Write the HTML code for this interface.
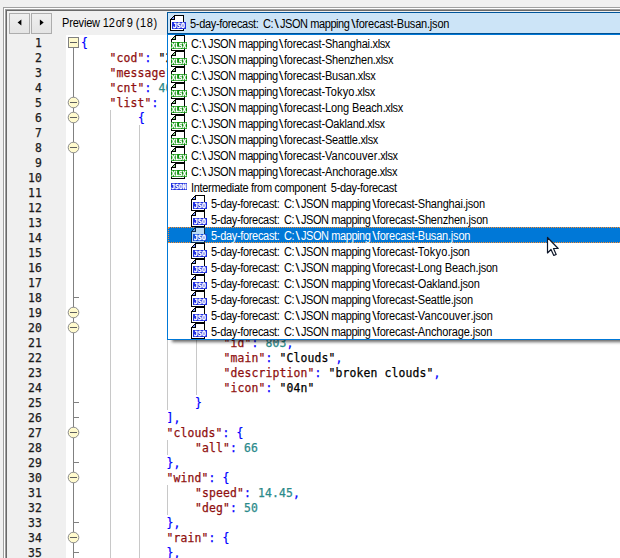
<!DOCTYPE html>
<html><head><meta charset="utf-8"><title>Preview</title>
<style>
html,body{margin:0;padding:0}
body{width:620px;height:558px;overflow:hidden;position:relative;background:#f0f0f0;font-family:"Liberation Sans",sans-serif;font-size:11px;color:#000}
.abs{position:absolute}
.ln{position:absolute;left:12px;width:30px;margin-top:1px;text-align:right;font:11.4px/15px "DejaVu Sans Mono","Liberation Mono",monospace;color:#1a1a1a;height:15px}
.cl{position:absolute;white-space:pre;margin-top:1px;font:11.4px/15px "DejaVu Sans Mono","Liberation Mono",monospace;height:15px}
.cl,.ln{letter-spacing:.137px}
.cl,.ln{-webkit-text-stroke:.25px}
.k{color:#8f1010}.p{color:#0000ff}.s{color:#000}.n{color:#2b8a8a}
.btn{position:absolute;top:13px;width:19px;height:19px;border:1px solid #adadad;background:linear-gradient(#efefef,#e4e4e4)}
.row{position:absolute;left:168px;right:0;height:16px;line-height:16px;white-space:pre}
.row svg{position:absolute;top:0;will-change:transform}
.row span,.lbl{position:absolute;top:1px;font-size:12.3px;letter-spacing:-.358px;transform:scaleX(.8943);transform-origin:0 50%}
.row i,.lbl i{font-style:normal}
.b1,.b2{display:inline-block;transform:scaleX(1.4)}
.c2{margin-right:1.79px}.b1{margin:0 2.91px 0 1.57px}.b2{margin:0 1.6px 0 2.42px}.sc{letter-spacing:-.47px}.sd{letter-spacing:-.224px}
.g{position:absolute;width:1px;background:#c8c8c8}
</style></head><body>

<div class="abs" style="left:3px;top:7px;right:0;height:1px;background:#a0a0a0"></div>
<div class="abs" style="left:3px;top:7px;bottom:0;width:1px;background:#a0a0a0"></div>
<div class="abs" style="left:4px;top:8px;right:0;height:1px;background:#fff"></div>
<div class="abs" style="left:4px;top:8px;bottom:0;width:1px;background:#fff"></div>
<div class="abs" style="left:5px;top:9px;right:0;height:1px;background:#a0a0a0"></div>
<div class="abs" style="left:5px;top:9px;bottom:0;width:1px;background:#a0a0a0"></div>
<div class="abs" style="left:6px;top:10px;right:0;height:1px;background:#696969"></div>
<div class="abs" style="left:6px;top:10px;bottom:0;width:1px;background:#696969"></div>
<div class="btn" style="left:9px"><svg width="19" height="19" style="position:absolute;left:0;top:0"><path d="M11.4 5.4 V11.6 L7.6 8.5 Z" fill="#000"/></svg></div>
<div class="btn" style="left:31px"><svg width="19" height="19" style="position:absolute;left:0;top:0"><path d="M7.9 5.4 V11.6 L11.7 8.5 Z" fill="#000"/></svg></div>
<div class="lbl" style="left:62px;top:12px;height:22px;line-height:22px;white-space:pre;letter-spacing:-.2px">Preview 12<i style="margin-left:-1.68px;letter-spacing:-.45px"> of 9</i><i style="margin-left:-.34px;letter-spacing:.615px"> (18)</i></div>
<div class="abs" style="left:66px;top:35px;right:0;bottom:0;background:#fff"></div>
<div class="ln" style="top:35px">1</div>
<div class="ln" style="top:50px">2</div>
<div class="ln" style="top:65px">3</div>
<div class="ln" style="top:80px">4</div>
<div class="ln" style="top:95px">5</div>
<div class="ln" style="top:110px">6</div>
<div class="ln" style="top:125px">7</div>
<div class="ln" style="top:140px">8</div>
<div class="ln" style="top:155px">9</div>
<div class="ln" style="top:170px">10</div>
<div class="ln" style="top:185px">11</div>
<div class="ln" style="top:200px">12</div>
<div class="ln" style="top:215px">13</div>
<div class="ln" style="top:230px">14</div>
<div class="ln" style="top:245px">15</div>
<div class="ln" style="top:260px">16</div>
<div class="ln" style="top:275px">17</div>
<div class="ln" style="top:290px">18</div>
<div class="ln" style="top:305px">19</div>
<div class="ln" style="top:320px">20</div>
<div class="ln" style="top:335px">21</div>
<div class="ln" style="top:350px">22</div>
<div class="ln" style="top:365px">23</div>
<div class="ln" style="top:380px">24</div>
<div class="ln" style="top:395px">25</div>
<div class="ln" style="top:410px">26</div>
<div class="ln" style="top:425px">27</div>
<div class="ln" style="top:440px">28</div>
<div class="ln" style="top:455px">29</div>
<div class="ln" style="top:470px">30</div>
<div class="ln" style="top:485px">31</div>
<div class="ln" style="top:500px">32</div>
<div class="ln" style="top:515px">33</div>
<div class="ln" style="top:530px">34</div>
<div class="ln" style="top:545px">35</div>
<div class="g" style="left:110px;top:110px;height:480px"></div>
<div class="g" style="left:139px;top:125px;height:465px"></div>
<div class="g" style="left:167px;top:125px;height:285px"></div>
<div class="g" style="left:196px;top:125px;height:270px"></div>
<div class="g" style="left:167px;top:440px;height:15px"></div>
<div class="g" style="left:167px;top:485px;height:30px"></div>
<div class="abs" style="left:73px;top:48px;bottom:0;width:1px;background:#808080"></div>
<div class="abs" style="left:73px;top:297px;width:6px;height:1px;background:#808080"></div>
<div class="abs" style="left:73px;top:402px;width:6px;height:1px;background:#808080"></div>
<div class="abs" style="left:73px;top:417px;width:6px;height:1px;background:#808080"></div>
<div class="abs" style="left:73px;top:462px;width:6px;height:1px;background:#808080"></div>
<div class="abs" style="left:73px;top:522px;width:6px;height:1px;background:#808080"></div>
<div class="abs" style="left:73px;top:552px;width:6px;height:1px;background:#808080"></div>
<div class="abs" style="left:68px;top:37px;width:9px;height:9px;border:1px solid #808080;background:#fffacd"><div class="abs" style="left:1px;top:4px;width:7px;height:1px;background:#606060"></div></div>
<svg class="abs" style="left:67px;top:96px" width="13" height="13"><circle cx="6.5" cy="6.5" r="5.3" fill="#fffacd" stroke="#8c8c8c" stroke-width="1"/><rect x="3" y="6" width="7" height="1" fill="#606060"/></svg>
<svg class="abs" style="left:67px;top:111px" width="13" height="13"><circle cx="6.5" cy="6.5" r="5.3" fill="#fffacd" stroke="#8c8c8c" stroke-width="1"/><rect x="3" y="6" width="7" height="1" fill="#606060"/></svg>
<svg class="abs" style="left:67px;top:141px" width="13" height="13"><circle cx="6.5" cy="6.5" r="5.3" fill="#fffacd" stroke="#8c8c8c" stroke-width="1"/><rect x="3" y="6" width="7" height="1" fill="#606060"/></svg>
<svg class="abs" style="left:67px;top:306px" width="13" height="13"><circle cx="6.5" cy="6.5" r="5.3" fill="#fffacd" stroke="#8c8c8c" stroke-width="1"/><rect x="3" y="6" width="7" height="1" fill="#606060"/></svg>
<svg class="abs" style="left:67px;top:321px" width="13" height="13"><circle cx="6.5" cy="6.5" r="5.3" fill="#fffacd" stroke="#8c8c8c" stroke-width="1"/><rect x="3" y="6" width="7" height="1" fill="#606060"/></svg>
<svg class="abs" style="left:67px;top:426px" width="13" height="13"><circle cx="6.5" cy="6.5" r="5.3" fill="#fffacd" stroke="#8c8c8c" stroke-width="1"/><rect x="3" y="6" width="7" height="1" fill="#606060"/></svg>
<svg class="abs" style="left:67px;top:471px" width="13" height="13"><circle cx="6.5" cy="6.5" r="5.3" fill="#fffacd" stroke="#8c8c8c" stroke-width="1"/><rect x="3" y="6" width="7" height="1" fill="#606060"/></svg>
<svg class="abs" style="left:67px;top:531px" width="13" height="13"><circle cx="6.5" cy="6.5" r="5.3" fill="#fffacd" stroke="#8c8c8c" stroke-width="1"/><rect x="3" y="6" width="7" height="1" fill="#606060"/></svg>
<div class="cl" style="left:81.1px;top:35px"><span class="p">{</span></div>
<div class="cl" style="left:109.6px;top:50px"><span class="k">"cod"</span><span class="p">: </span><span class="s">"200",</span></div>
<div class="cl" style="left:109.6px;top:65px"><span class="k">"message"</span><span class="p">: </span><span class="n">0</span><span class="p">,</span></div>
<div class="cl" style="left:109.6px;top:80px"><span class="k">"cnt"</span><span class="p">: </span><span class="n">40</span><span class="p">,</span></div>
<div class="cl" style="left:109.6px;top:95px"><span class="k">"list"</span><span class="p">: [</span></div>
<div class="cl" style="left:138.1px;top:110px"><span class="p">{</span></div>
<div class="cl" style="left:223.6px;top:335px"><span class="k">"id"</span><span class="p">: </span><span class="n">803</span><span class="p">,</span></div>
<div class="cl" style="left:223.6px;top:350px"><span class="k">"main"</span><span class="p">: </span><span class="s">"Clouds"</span><span class="p">,</span></div>
<div class="cl" style="left:223.6px;top:365px"><span class="k">"description"</span><span class="p">: </span><span class="s">"broken clouds"</span><span class="p">,</span></div>
<div class="cl" style="left:223.6px;top:380px"><span class="k">"icon"</span><span class="p">: </span><span class="s">"04n"</span></div>
<div class="cl" style="left:195.1px;top:395px"><span class="p">}</span></div>
<div class="cl" style="left:166.6px;top:410px"><span class="p">],</span></div>
<div class="cl" style="left:166.6px;top:425px"><span class="k">"clouds"</span><span class="p">: {</span></div>
<div class="cl" style="left:195.1px;top:440px"><span class="k">"all"</span><span class="p">: </span><span class="n">66</span></div>
<div class="cl" style="left:166.6px;top:455px"><span class="p">},</span></div>
<div class="cl" style="left:166.6px;top:470px"><span class="k">"wind"</span><span class="p">: {</span></div>
<div class="cl" style="left:195.1px;top:485px"><span class="k">"speed"</span><span class="p">: </span><span class="n">14.45</span><span class="p">,</span></div>
<div class="cl" style="left:195.1px;top:500px"><span class="k">"deg"</span><span class="p">: </span><span class="n">50</span></div>
<div class="cl" style="left:166.6px;top:515px"><span class="p">},</span></div>
<div class="cl" style="left:166.6px;top:530px"><span class="k">"rain"</span><span class="p">: {</span></div>
<div class="cl" style="left:166.6px;top:545px"><span class="p">},</span></div>
<div class="abs" style="left:167px;top:12px;right:0;height:20px;border:1px solid #005499;border-right:none;background:#cce4f7"></div>
<div class="row" style="top:15px"><svg width="16" height="16" style="left:2px" shape-rendering="crispEdges"><path d="M4.5 0.5 H13.5 V15.5 H0.5 V4.5 Z" fill="#fff" stroke="#000"/><path d="M0.5 4.5 H4.5 V0.5 Z" fill="#7f9cff" stroke="#000"/><rect x="2" y="7" width="14" height="7" fill="#1f2fe0"/><text x="3" y="13" font-family="DejaVu Sans Mono,monospace" font-size="7" font-weight="bold" fill="#fff" stroke="#fff" stroke-width=".35" textLength="12" lengthAdjust="spacingAndGlyphs">JSO</text></svg><span style="left:22px">5-day-forecast<i class="c2">:</i> C<i class="c">:</i><i class="b1">\</i><i class="sc">JSON mapping</i><i class="b2">\</i><i class="sd">forecast-Busan.json</i></span></div>
<div class="abs" style="left:167px;top:34px;right:0;height:304px;border:1px solid #0078d7;border-right:none;background:#fff;box-shadow:5px 2px 3px rgba(0,0,0,.6)"></div>
<div class="row" style="top:35px"><svg x="0" width="16" height="16" style="left:3px" shape-rendering="crispEdges"><path d="M4.5 0.5 H13.5 V15.5 H0.5 V4.5 Z" fill="#fff" stroke="#000"/><path d="M0.5 4.5 H4.5 V0.5 Z" fill="#8fce8f" stroke="#000"/><rect x="0" y="7" width="16" height="7" fill="#0c900c"/><text x="0.5" y="13" font-family="DejaVu Sans,sans-serif" font-size="6.8" font-weight="bold" fill="#fff" stroke="#fff" stroke-width=".35" textLength="15" lengthAdjust="spacingAndGlyphs">XLSX</text></svg><span style="left:23px">C<i class="c">:</i><i class="b1">\</i><i class="sc">JSON mapping</i><i class="b2">\</i><i class="sd">forecast-Shanghai<i style="letter-spacing:-.4px">.xlsx</i></i></span></div>
<div class="row" style="top:51px"><svg x="0" width="16" height="16" style="left:3px" shape-rendering="crispEdges"><path d="M4.5 0.5 H13.5 V15.5 H0.5 V4.5 Z" fill="#fff" stroke="#000"/><path d="M0.5 4.5 H4.5 V0.5 Z" fill="#8fce8f" stroke="#000"/><rect x="0" y="7" width="16" height="7" fill="#0c900c"/><text x="0.5" y="13" font-family="DejaVu Sans,sans-serif" font-size="6.8" font-weight="bold" fill="#fff" stroke="#fff" stroke-width=".35" textLength="15" lengthAdjust="spacingAndGlyphs">XLSX</text></svg><span style="left:23px">C<i class="c">:</i><i class="b1">\</i><i class="sc">JSON mapping</i><i class="b2">\</i><i class="sd">forecast-Shenzhen<i style="letter-spacing:-.4px">.xlsx</i></i></span></div>
<div class="row" style="top:67px"><svg x="0" width="16" height="16" style="left:3px" shape-rendering="crispEdges"><path d="M4.5 0.5 H13.5 V15.5 H0.5 V4.5 Z" fill="#fff" stroke="#000"/><path d="M0.5 4.5 H4.5 V0.5 Z" fill="#8fce8f" stroke="#000"/><rect x="0" y="7" width="16" height="7" fill="#0c900c"/><text x="0.5" y="13" font-family="DejaVu Sans,sans-serif" font-size="6.8" font-weight="bold" fill="#fff" stroke="#fff" stroke-width=".35" textLength="15" lengthAdjust="spacingAndGlyphs">XLSX</text></svg><span style="left:23px">C<i class="c">:</i><i class="b1">\</i><i class="sc">JSON mapping</i><i class="b2">\</i><i class="sd">forecast-Busan<i style="letter-spacing:-.4px">.xlsx</i></i></span></div>
<div class="row" style="top:83px"><svg x="0" width="16" height="16" style="left:3px" shape-rendering="crispEdges"><path d="M4.5 0.5 H13.5 V15.5 H0.5 V4.5 Z" fill="#fff" stroke="#000"/><path d="M0.5 4.5 H4.5 V0.5 Z" fill="#8fce8f" stroke="#000"/><rect x="0" y="7" width="16" height="7" fill="#0c900c"/><text x="0.5" y="13" font-family="DejaVu Sans,sans-serif" font-size="6.8" font-weight="bold" fill="#fff" stroke="#fff" stroke-width=".35" textLength="15" lengthAdjust="spacingAndGlyphs">XLSX</text></svg><span style="left:23px">C<i class="c">:</i><i class="b1">\</i><i class="sc">JSON mapping</i><i class="b2">\</i><i class="sd">forecast-<i style="letter-spacing:0.223px">Tokyo</i><i style="letter-spacing:-.4px">.xlsx</i></i></span></div>
<div class="row" style="top:99px"><svg x="0" width="16" height="16" style="left:3px" shape-rendering="crispEdges"><path d="M4.5 0.5 H13.5 V15.5 H0.5 V4.5 Z" fill="#fff" stroke="#000"/><path d="M0.5 4.5 H4.5 V0.5 Z" fill="#8fce8f" stroke="#000"/><rect x="0" y="7" width="16" height="7" fill="#0c900c"/><text x="0.5" y="13" font-family="DejaVu Sans,sans-serif" font-size="6.8" font-weight="bold" fill="#fff" stroke="#fff" stroke-width=".35" textLength="15" lengthAdjust="spacingAndGlyphs">XLSX</text></svg><span style="left:23px">C<i class="c">:</i><i class="b1">\</i><i class="sc">JSON mapping</i><i class="b2">\</i><i class="sd">forecast-<i style="letter-spacing:-0.112px">Long Beach</i><i style="letter-spacing:-.4px">.xlsx</i></i></span></div>
<div class="row" style="top:115px"><svg x="0" width="16" height="16" style="left:3px" shape-rendering="crispEdges"><path d="M4.5 0.5 H13.5 V15.5 H0.5 V4.5 Z" fill="#fff" stroke="#000"/><path d="M0.5 4.5 H4.5 V0.5 Z" fill="#8fce8f" stroke="#000"/><rect x="0" y="7" width="16" height="7" fill="#0c900c"/><text x="0.5" y="13" font-family="DejaVu Sans,sans-serif" font-size="6.8" font-weight="bold" fill="#fff" stroke="#fff" stroke-width=".35" textLength="15" lengthAdjust="spacingAndGlyphs">XLSX</text></svg><span style="left:23px">C<i class="c">:</i><i class="b1">\</i><i class="sc">JSON mapping</i><i class="b2">\</i><i class="sd">forecast-Oakland<i style="letter-spacing:-.4px">.xlsx</i></i></span></div>
<div class="row" style="top:131px"><svg x="0" width="16" height="16" style="left:3px" shape-rendering="crispEdges"><path d="M4.5 0.5 H13.5 V15.5 H0.5 V4.5 Z" fill="#fff" stroke="#000"/><path d="M0.5 4.5 H4.5 V0.5 Z" fill="#8fce8f" stroke="#000"/><rect x="0" y="7" width="16" height="7" fill="#0c900c"/><text x="0.5" y="13" font-family="DejaVu Sans,sans-serif" font-size="6.8" font-weight="bold" fill="#fff" stroke="#fff" stroke-width=".35" textLength="15" lengthAdjust="spacingAndGlyphs">XLSX</text></svg><span style="left:23px">C<i class="c">:</i><i class="b1">\</i><i class="sc">JSON mapping</i><i class="b2">\</i><i class="sd">forecast-Seattle<i style="letter-spacing:-.4px">.xlsx</i></i></span></div>
<div class="row" style="top:147px"><svg x="0" width="16" height="16" style="left:3px" shape-rendering="crispEdges"><path d="M4.5 0.5 H13.5 V15.5 H0.5 V4.5 Z" fill="#fff" stroke="#000"/><path d="M0.5 4.5 H4.5 V0.5 Z" fill="#8fce8f" stroke="#000"/><rect x="0" y="7" width="16" height="7" fill="#0c900c"/><text x="0.5" y="13" font-family="DejaVu Sans,sans-serif" font-size="6.8" font-weight="bold" fill="#fff" stroke="#fff" stroke-width=".35" textLength="15" lengthAdjust="spacingAndGlyphs">XLSX</text></svg><span style="left:23px">C<i class="c">:</i><i class="b1">\</i><i class="sc">JSON mapping</i><i class="b2">\</i><i class="sd">forecast-<i style="letter-spacing:0.099px">Vancouver</i><i style="letter-spacing:-.4px">.xlsx</i></i></span></div>
<div class="row" style="top:163px"><svg x="0" width="16" height="16" style="left:3px" shape-rendering="crispEdges"><path d="M4.5 0.5 H13.5 V15.5 H0.5 V4.5 Z" fill="#fff" stroke="#000"/><path d="M0.5 4.5 H4.5 V0.5 Z" fill="#8fce8f" stroke="#000"/><rect x="0" y="7" width="16" height="7" fill="#0c900c"/><text x="0.5" y="13" font-family="DejaVu Sans,sans-serif" font-size="6.8" font-weight="bold" fill="#fff" stroke="#fff" stroke-width=".35" textLength="15" lengthAdjust="spacingAndGlyphs">XLSX</text></svg><span style="left:23px">C<i class="c">:</i><i class="b1">\</i><i class="sc">JSON mapping</i><i class="b2">\</i><i class="sd">forecast-<i style="letter-spacing:-0.149px">Anchorage</i><i style="letter-spacing:-.4px">.xlsx</i></i></span></div>
<div class="row" style="top:179px"><svg width="16" height="16" style="left:3px" shape-rendering="crispEdges"><rect x="0" y="4" width="16" height="7" fill="#1f2fe0"/><text x="0.5" y="10" font-family="DejaVu Sans Mono,monospace" font-size="6.8" font-weight="bold" fill="#fff" stroke="#fff" stroke-width=".35" textLength="15" lengthAdjust="spacingAndGlyphs">JSON</text></svg><span style="left:23px">Intermediate from component <i style="margin-left:2.4px">5-day-forecast</i></span></div>
<div class="row" style="top:195px;"><svg width="16" height="16" style="left:23px" shape-rendering="crispEdges"><path d="M4.5 0.5 H13.5 V15.5 H0.5 V4.5 Z" fill="#fff" stroke="#000"/><path d="M0.5 4.5 H4.5 V0.5 Z" fill="#7f9cff" stroke="#000"/><rect x="2" y="7" width="14" height="7" fill="#1f2fe0"/><text x="3" y="13" font-family="DejaVu Sans Mono,monospace" font-size="7" font-weight="bold" fill="#fff" stroke="#fff" stroke-width=".35" textLength="12" lengthAdjust="spacingAndGlyphs">JSO</text></svg><span id="tSha" style="left:43px">5-day-forecast<i class="c2">:</i> C<i class="c">:</i><i class="b1">\</i><i class="sc">JSON mapping</i><i class="b2">\</i><i class="sd">forecast-Shanghai.json</i></span></div>
<div class="row" style="top:211px;"><svg width="16" height="16" style="left:23px" shape-rendering="crispEdges"><path d="M4.5 0.5 H13.5 V15.5 H0.5 V4.5 Z" fill="#fff" stroke="#000"/><path d="M0.5 4.5 H4.5 V0.5 Z" fill="#7f9cff" stroke="#000"/><rect x="2" y="7" width="14" height="7" fill="#1f2fe0"/><text x="3" y="13" font-family="DejaVu Sans Mono,monospace" font-size="7" font-weight="bold" fill="#fff" stroke="#fff" stroke-width=".35" textLength="12" lengthAdjust="spacingAndGlyphs">JSO</text></svg><span id="tShe" style="left:43px">5-day-forecast<i class="c2">:</i> C<i class="c">:</i><i class="b1">\</i><i class="sc">JSON mapping</i><i class="b2">\</i><i class="sd">forecast-Shenzhen.json</i></span></div>
<div class="row" style="top:227px;background:#0078d7;color:#fff;right:-4px;outline:1px dotted #ff8c2a;outline-offset:-1px;"><svg width="16" height="16" style="left:23px" shape-rendering="crispEdges"><path d="M4.5 0.5 H13.5 V15.5 H0.5 V4.5 Z" fill="#b5d9f4" stroke="#0b2d50"/><path d="M0.5 4.5 H4.5 V0.5 Z" fill="#5f9cf0" stroke="#0b2d50"/><rect x="2" y="7" width="14" height="7" fill="#1450dc"/><text x="3" y="13" font-family="DejaVu Sans Mono,monospace" font-size="7" font-weight="bold" fill="#fff" stroke="#fff" stroke-width=".35" textLength="12" lengthAdjust="spacingAndGlyphs">JSO</text></svg><span id="tBus" style="left:43px">5-day-forecast<i class="c2">:</i> C<i class="c">:</i><i class="b1">\</i><i class="sc">JSON mapping</i><i class="b2">\</i><i class="sd">forecast-Busan.json</i></span></div>
<div class="row" style="top:243px;"><svg width="16" height="16" style="left:23px" shape-rendering="crispEdges"><path d="M4.5 0.5 H13.5 V15.5 H0.5 V4.5 Z" fill="#fff" stroke="#000"/><path d="M0.5 4.5 H4.5 V0.5 Z" fill="#7f9cff" stroke="#000"/><rect x="2" y="7" width="14" height="7" fill="#1f2fe0"/><text x="3" y="13" font-family="DejaVu Sans Mono,monospace" font-size="7" font-weight="bold" fill="#fff" stroke="#fff" stroke-width=".35" textLength="12" lengthAdjust="spacingAndGlyphs">JSO</text></svg><span id="tTok" style="left:43px">5-day-forecast<i class="c2">:</i> C<i class="c">:</i><i class="b1">\</i><i class="sc">JSON mapping</i><i class="b2">\</i><i class="sd">forecast-<i style="letter-spacing:0.223px">Tokyo</i>.json</i></span></div>
<div class="row" style="top:259px;"><svg width="16" height="16" style="left:23px" shape-rendering="crispEdges"><path d="M4.5 0.5 H13.5 V15.5 H0.5 V4.5 Z" fill="#fff" stroke="#000"/><path d="M0.5 4.5 H4.5 V0.5 Z" fill="#7f9cff" stroke="#000"/><rect x="2" y="7" width="14" height="7" fill="#1f2fe0"/><text x="3" y="13" font-family="DejaVu Sans Mono,monospace" font-size="7" font-weight="bold" fill="#fff" stroke="#fff" stroke-width=".35" textLength="12" lengthAdjust="spacingAndGlyphs">JSO</text></svg><span id="tLon" style="left:43px">5-day-forecast<i class="c2">:</i> C<i class="c">:</i><i class="b1">\</i><i class="sc">JSON mapping</i><i class="b2">\</i><i class="sd">forecast-<i style="letter-spacing:-0.112px">Long Beach</i>.json</i></span></div>
<div class="row" style="top:275px;"><svg width="16" height="16" style="left:23px" shape-rendering="crispEdges"><path d="M4.5 0.5 H13.5 V15.5 H0.5 V4.5 Z" fill="#fff" stroke="#000"/><path d="M0.5 4.5 H4.5 V0.5 Z" fill="#7f9cff" stroke="#000"/><rect x="2" y="7" width="14" height="7" fill="#1f2fe0"/><text x="3" y="13" font-family="DejaVu Sans Mono,monospace" font-size="7" font-weight="bold" fill="#fff" stroke="#fff" stroke-width=".35" textLength="12" lengthAdjust="spacingAndGlyphs">JSO</text></svg><span id="tOak" style="left:43px">5-day-forecast<i class="c2">:</i> C<i class="c">:</i><i class="b1">\</i><i class="sc">JSON mapping</i><i class="b2">\</i><i class="sd">forecast-Oakland.json</i></span></div>
<div class="row" style="top:291px;"><svg width="16" height="16" style="left:23px" shape-rendering="crispEdges"><path d="M4.5 0.5 H13.5 V15.5 H0.5 V4.5 Z" fill="#fff" stroke="#000"/><path d="M0.5 4.5 H4.5 V0.5 Z" fill="#7f9cff" stroke="#000"/><rect x="2" y="7" width="14" height="7" fill="#1f2fe0"/><text x="3" y="13" font-family="DejaVu Sans Mono,monospace" font-size="7" font-weight="bold" fill="#fff" stroke="#fff" stroke-width=".35" textLength="12" lengthAdjust="spacingAndGlyphs">JSO</text></svg><span id="tSea" style="left:43px">5-day-forecast<i class="c2">:</i> C<i class="c">:</i><i class="b1">\</i><i class="sc">JSON mapping</i><i class="b2">\</i><i class="sd">forecast-Seattle.json</i></span></div>
<div class="row" style="top:307px;"><svg width="16" height="16" style="left:23px" shape-rendering="crispEdges"><path d="M4.5 0.5 H13.5 V15.5 H0.5 V4.5 Z" fill="#fff" stroke="#000"/><path d="M0.5 4.5 H4.5 V0.5 Z" fill="#7f9cff" stroke="#000"/><rect x="2" y="7" width="14" height="7" fill="#1f2fe0"/><text x="3" y="13" font-family="DejaVu Sans Mono,monospace" font-size="7" font-weight="bold" fill="#fff" stroke="#fff" stroke-width=".35" textLength="12" lengthAdjust="spacingAndGlyphs">JSO</text></svg><span id="tVan" style="left:43px">5-day-forecast<i class="c2">:</i> C<i class="c">:</i><i class="b1">\</i><i class="sc">JSON mapping</i><i class="b2">\</i><i class="sd">forecast-<i style="letter-spacing:0.099px">Vancouver</i>.json</i></span></div>
<div class="row" style="top:323px;"><svg width="16" height="16" style="left:23px" shape-rendering="crispEdges"><path d="M4.5 0.5 H13.5 V15.5 H0.5 V4.5 Z" fill="#fff" stroke="#000"/><path d="M0.5 4.5 H4.5 V0.5 Z" fill="#7f9cff" stroke="#000"/><rect x="2" y="7" width="14" height="7" fill="#1f2fe0"/><text x="3" y="13" font-family="DejaVu Sans Mono,monospace" font-size="7" font-weight="bold" fill="#fff" stroke="#fff" stroke-width=".35" textLength="12" lengthAdjust="spacingAndGlyphs">JSO</text></svg><span id="tAnc" style="left:43px">5-day-forecast<i class="c2">:</i> C<i class="c">:</i><i class="b1">\</i><i class="sc">JSON mapping</i><i class="b2">\</i><i class="sd">forecast-<i style="letter-spacing:-0.149px">Anchorage</i>.json</i></span></div>
<svg class="abs" style="left:546px;top:236px" width="14" height="21"><path d="M1.5 1.5 V17 L5 13.5 L7.8 19.5 L10.2 18.4 L7.5 12.5 H12.2 Z" fill="#fff" stroke="#10182a" stroke-width="1.2" stroke-linejoin="round"/></svg>
</body></html>
